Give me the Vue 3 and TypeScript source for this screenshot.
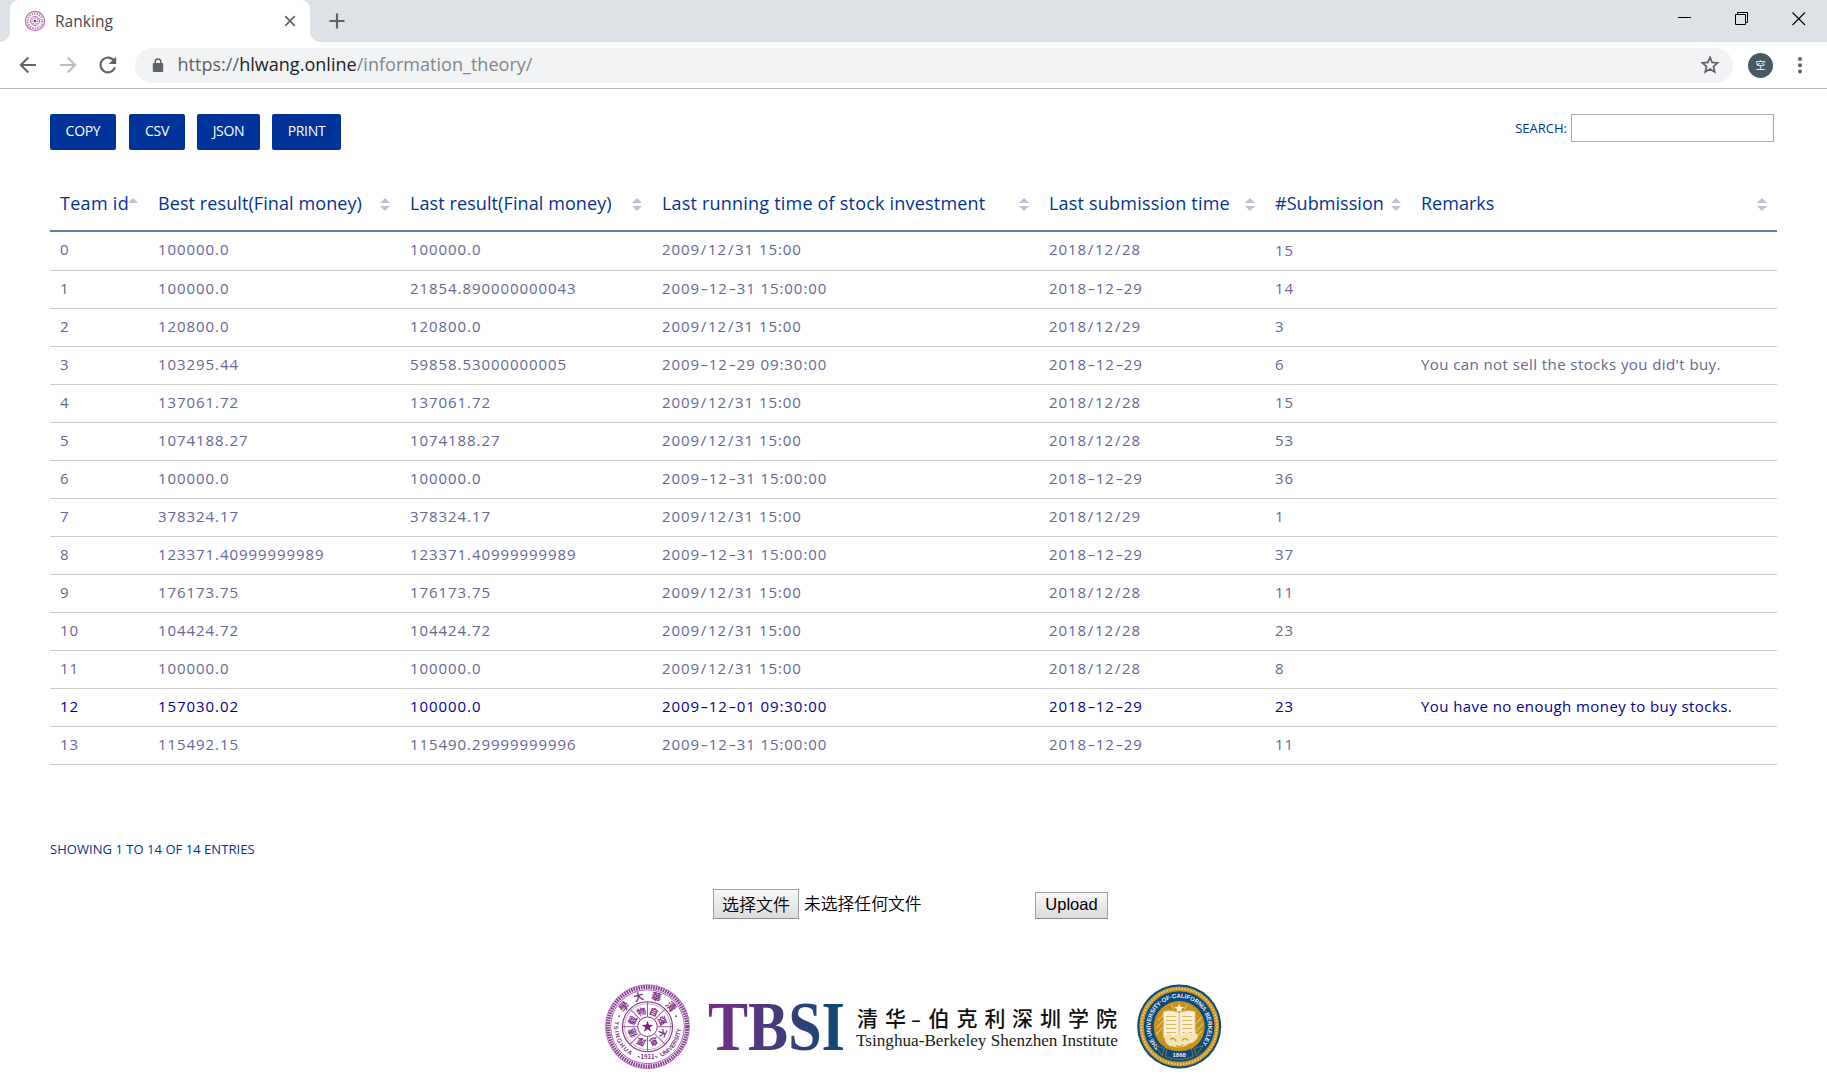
<script setup lang="ts">
interface Column { label: string; width: number; sorted?: boolean }
type Row = [string, string, string, string, string, string, string]

const columns: Column[] = [
  { label: 'Team id', width: 98, sorted: true },
  { label: 'Best result(Final money)', width: 252 },
  { label: 'Last result(Final money)', width: 252 },
  { label: 'Last running time of stock investment', width: 387 },
  { label: 'Last submission time', width: 226 },
  { label: '#Submission', width: 146 },
  { label: 'Remarks', width: 366 },
]

const rows: Row[] = [
  ['0', '100000.0', '100000.0', '2009/12/31 15:00', '2018/12/28', '15', ''],
  ['1', '100000.0', '21854.890000000043', '2009-12-31 15:00:00', '2018-12-29', '14', ''],
  ['2', '120800.0', '120800.0', '2009/12/31 15:00', '2018/12/29', '3', ''],
  ['3', '103295.44', '59858.53000000005', '2009-12-29 09:30:00', '2018-12-29', '6', "You can not sell the stocks you did't buy."],
  ['4', '137061.72', '137061.72', '2009/12/31 15:00', '2018/12/28', '15', ''],
  ['5', '1074188.27', '1074188.27', '2009/12/31 15:00', '2018/12/28', '53', ''],
  ['6', '100000.0', '100000.0', '2009-12-31 15:00:00', '2018-12-29', '36', ''],
  ['7', '378324.17', '378324.17', '2009/12/31 15:00', '2018/12/29', '1', ''],
  ['8', '123371.40999999989', '123371.40999999989', '2009-12-31 15:00:00', '2018-12-29', '37', ''],
  ['9', '176173.75', '176173.75', '2009/12/31 15:00', '2018/12/28', '11', ''],
  ['10', '104424.72', '104424.72', '2009/12/31 15:00', '2018/12/28', '23', ''],
  ['11', '100000.0', '100000.0', '2009/12/31 15:00', '2018/12/28', '8', ''],
  ['12', '157030.02', '100000.0', '2009-12-01 09:30:00', '2018-12-29', '23', 'You have no enough money to buy stocks.'],
  ['13', '115492.15', '115490.29999999996', '2009-12-31 15:00:00', '2018-12-29', '11', ''],
]
const hovered = 12

const parts = (text: string): string[] => text.split(/([-/])/)
const exportButtons = [
  { label: 'COPY', width: 66, gap: 13 },
  { label: 'CSV', width: 56, gap: 12 },
  { label: 'JSON', width: 63, gap: 12 },
  { label: 'PRINT', width: 69, gap: 0 },
]
const sectors = [0, 45, 90, 135, 180, 225, 270, 315]
const motto = [...'自强不息厚德载物']
</script>

<template>
  <div class="window">
    <div class="tabstrip">
      <div class="tab">
        <svg class="favicon" width="22" height="22" viewBox="0 0 22 22">
          <g fill="none" stroke="#b877b4">
            <circle cx="11" cy="11" r="9.6" stroke-width="1.2" />
            <circle cx="11" cy="11" r="7.4" stroke-width="2" stroke-dasharray="1.4 1.2" />
            <circle cx="11" cy="11" r="4.6" stroke-width="1" />
            <circle cx="11" cy="11" r="3" stroke-width="1.6" stroke-dasharray="1.1 .9" />
          </g>
          <circle cx="11" cy="11" r="1.3" fill="#7a2b80" />
        </svg>
        <span class="tab-title">Ranking</span>
        <svg class="tab-close" width="12" height="12" viewBox="0 0 12 12"><path d="M1.2 1.2l9.6 9.6M10.8 1.2l-9.6 9.6" stroke="#5f6368" stroke-width="1.7" /></svg>
      </div>
      <svg class="plus" width="16" height="16" viewBox="0 0 16 16"><path d="M8 .5v15M.5 8h15" stroke="#5f6368" stroke-width="2.2" /></svg>
      <div class="controls">
        <svg width="14" height="14" viewBox="0 0 14 14"><path d="M0 5.5h13" stroke="#000" /></svg>
        <svg width="14" height="14" viewBox="0 0 14 14"><path d="M.5 2.500h10v10h-10zM2.500 2.500v-2h10v10h-2" fill="none" stroke="#000" /></svg>
        <svg width="14" height="14" viewBox="0 0 14 14"><path d="M.5.5l12.500 12.500M13 .5L.5 13" stroke="#000" stroke-width="1.100" /></svg>
      </div>
    </div>

    <div class="toolbar">
      <svg class="nav" width="18" height="18" viewBox="0 0 18 18"><path d="M17 9H2.200M9.300 1.500L1.800 9l7.500 7.500" fill="none" stroke="#5f6368" stroke-width="2" /></svg>
      <svg class="nav" width="18" height="18" viewBox="0 0 18 18"><path d="M1 9h14.800M8.700 1.500L16.200 9l-7.500 7.500" fill="none" stroke="#bcbec1" stroke-width="2" /></svg>
      <svg class="nav reload" width="20" height="20" viewBox="0 0 20 20">
        <path d="M16.200 6A7.400 7.400 0 1 0 17 12.200" fill="none" stroke="#5f6368" stroke-width="2.100" />
        <path d="M18.200 1.500v7.600h-7.600z" fill="#5f6368" />
      </svg>
      <div class="omnibox">
        <svg class="lock" width="12" height="15" viewBox="0 0 12 15">
          <rect x=".8" y="5" width="10.400" height="9" rx="1.100" fill="#5f6368" />
          <path d="M3.200 5.500V3.700a2.800 2.800 0 0 1 5.600 0v1.800" fill="none" stroke="#5f6368" stroke-width="1.500" />
        </svg>
        <span class="url">https://<b>hlwang.online</b><i>/information_theory/</i></span>
        <svg class="star" width="20" height="20" viewBox="0 0 20 20"><path d="M10 2.400l2.150 5.050 5.450.5-4.150 3.600 1.250 5.350L10 14.050 5.300 16.900l1.250-5.350-4.150-3.600 5.450-.5z" fill="none" stroke="#5f6368" stroke-width="1.700" /></svg>
      </div>
      <div class="avatar">空</div>
      <svg class="dots" width="6" height="18" viewBox="0 0 6 18"><g fill="#5f6368"><circle cx="3" cy="3" r="2" /><circle cx="3" cy="9.200" r="2" /><circle cx="3" cy="15.400" r="2" /></g></svg>
    </div>

    <main class="page">
      <div class="actions">
        <button v-for="b in exportButtons" :key="b.label" class="export" :style="{ width: b.width + 'px', marginRight: b.gap + 'px' }">{{ b.label }}</button>
        <label class="search"><span>SEARCH:</span><input type="text" /></label>
      </div>

      <table class="ranking">
        <colgroup><col v-for="c in columns" :key="c.label" :style="{ width: c.width + 'px' }" /></colgroup>
        <thead>
          <tr>
            <th v-for="(c, i) in columns" :key="c.label">
              <div class="head">
                <span :class="'h' + i">{{ c.label }}</span>
                <svg class="sort" width="10" height="14" viewBox="0 0 10 14">
                  <path d="M0 5l5-5 5 5z" fill="#c1c0da" />
                  <path v-if="!c.sorted" d="M0 8l5 5 5-5z" fill="#c1c0da" />
                </svg>
              </div>
            </th>
          </tr>
        </thead>
        <tbody>
          <tr v-for="(row, r) in rows" :key="row[0]" :class="{ hovered: r === hovered }">
            <td v-for="(cell, c) in row" :key="c" :class="'c' + c">
              <template v-for="(p, k) in parts(cell)" :key="k"><span v-if="p === '-'" class="dash">-</span><span v-else-if="p === '/'" class="slash">/</span><template v-else>{{ p }}</template></template>
            </td>
          </tr>
        </tbody>
      </table>

      <div class="info">SHOWING 1 TO 14 OF 14 ENTRIES</div>

      <div class="upload">
        <button class="native pick">选择文件</button>
        <span class="status">未选择任何文件</span>
        <button class="native send">Upload</button>
      </div>

      <svg class="brand" width="624" height="90" viewBox="602 982 624 90">
        <defs>
          <linearGradient id="tbsi" gradientUnits="userSpaceOnUse" x1="708" y1="0" x2="844" y2="0">
            <stop offset="0" stop-color="#7b2d87" />
            <stop offset=".45" stop-color="#4a3a7b" />
            <stop offset="1" stop-color="#0b4a72" />
          </linearGradient>
          <path id="thu-left" d="M-32.600 -7A33.300 33.300 0 0 0 -13 30.700" />
          <path id="thu-right" d="M14 30.300A33.300 33.300 0 0 0 32.900 -5" />
          <path id="thu-top" d="M-25.500 -10A27.400 27.400 0 0 1 25.500 -10" />
          <path id="cal-ring" d="M-19.600 21A28.700 28.700 0 1 1 19.600 21" />
        </defs>

        <g transform="translate(647.500 1026.700)">
          <circle r="39.700" fill="none" stroke="#8b3f94" stroke-width="4" stroke-dasharray="1.700 .8" />
          <circle r="42" fill="none" stroke="#9a5aa3" stroke-width=".7" />
          <circle r="36.900" fill="none" stroke="#8b3f94" stroke-width=".8" />
          <circle r="25" fill="none" stroke="#7f2f88" stroke-width="1.100" />
          <circle r="23" fill="none" stroke="#a468ab" stroke-width=".6" />
          <circle r="9.800" fill="none" stroke="#7f2f88" stroke-width="1" />
          <g v-for="(a, i) in sectors" :key="a" :transform="`rotate(${a})`">
            <path d="M0 -10V-24.500" stroke="#9a5aa3" stroke-width="1" />
            <g transform="rotate(22.500)"><text class="seal-cn" y="-12.800" font-size="9">{{ motto[i] }}</text></g>
          </g>
          <path d="M0 -6l1.450 4.100 4.350.1-3.450 2.650 1.250 4.150L0 2.500l-3.600 2.500 1.250-4.150L-5.800 -1.800l4.350-.1z" fill="#7b2483" />
          <text class="seal-cn" font-size="10"><textPath href="#thu-top" startOffset="50%" textLength="57">學大華清</textPath></text>
          <text class="seal-en"><textPath href="#thu-left" startOffset="3%" textLength="40">TSINGHUA</textPath></text>
          <text class="seal-en"><textPath href="#thu-right" textLength="36">UNIVERSITY</textPath></text>
          <text class="seal-cn" y="32.500" font-size="6">~1911~</text>
          <circle cx="-28.500" cy="-10.500" r=".9" fill="#7f2f88" /><circle cx="28.500" cy="-10.500" r=".9" fill="#7f2f88" />
        </g>

        <text class="tbsi" x="708" y="1050" textLength="137" lengthAdjust="spacingAndGlyphs">TBSI</text>
        <text class="inst-cn" x="857 885" y="1026">清华</text>
        <text class="inst-cn" x="911" y="1026" textLength="10" lengthAdjust="spacingAndGlyphs">-</text>
        <text class="inst-cn" x="928.500 956.500 984.500 1012 1040 1068 1096" y="1026">伯克利深圳学院</text>
        <text class="inst-en" x="856" y="1046" textLength="262" lengthAdjust="spacingAndGlyphs">Tsinghua-Berkeley Shenzhen Institute</text>

        <g transform="translate(1179.200 1026.500)">
          <circle r="42" fill="#0c4a7b" />
          <circle r="37.600" fill="none" stroke="#c8941f" stroke-width="4.600" />
          <circle r="37.800" fill="none" stroke="#ecd08a" stroke-width="1.800" stroke-dasharray="1.500 1.500" />
          <circle r="25.500" fill="#c8921a" />
          <text class="cal"><textPath href="#cal-ring" textLength="132" startOffset="0">THE·UNIVERSITY·OF·CALIFORNIA·BERKELEY</textPath></text>
          <path d="M-23 8l7-8M-23 2l7-8M-21-6l6-7M22-9l-6 7M24-3l-8 9M23 4l-8 9M-8-22l3 5M8-22l-3 5" stroke="#ecd08a" stroke-width="1" />
          <path d="M0-23l1.300 3.300 3.500.2-2.700 2.200.9 3.500-3-1.900-3 1.900.9-3.500-2.700-2.200 3.500-.2z" fill="#fff4d6" />
          <path d="M-16-15q8-2.500 16 1 8-3.500 16-1v26q-8-2-16 1-8-3-16-1z" fill="#fbf1d6" stroke="#dcae50" stroke-width=".8" />
          <path d="M0-14v26M-13-10h10M-13-6h10M-13-2h10M-13 2h10M-13 6h10M3-10h10M3-6h10M3-2h10M3 2h10M3 6h10" stroke="#dfb45a" stroke-width="1" />
          <path d="M-15 10q5-6 9 0 5-5 9-1 4-8 8-2 6-2 8 2-2 7-9 8-8 6-16 3-8 0-9-10z" fill="#f4e3b4" />
          <path d="M-9 13q4-3 6 2M3 14q3-4 6 0M-3 19q4 3 7-1" fill="none" stroke="#c8921a" stroke-width="1.200" />
          <path d="M-12 22q12 5 24 0l2 8q-14 6-28 0zM-24 19l9 3-2 7zM24 19l-9 3 2 7z" fill="#0c4a7b" stroke="#c8941f" stroke-width=".6" />
          <text class="cal" y="30.500" text-anchor="middle">1868</text>
        </g>
      </svg>
    </main>
  </div>
</template>

<style>
body { margin: 0; background: #fff; overflow: hidden; }
</style>

<style scoped>
.window { width: 1827px; height: 1080px; background: #fff; font-family: "Open Sans", "Noto Sans CJK SC", sans-serif; overflow: hidden; }
.tabstrip { height: 42px; display: flex; align-items: center; background: #dee1e6; box-sizing: border-box; padding-left: 10px; }
.tab { position: relative; width: 300px; height: 42px; box-sizing: border-box; background: #fff; border-radius: 9px 9px 0 0; display: flex; align-items: center; padding-left: 14px; }
.tab::before, .tab::after { content: ""; position: absolute; bottom: 0; width: 10px; height: 10px; }
.tab::before { left: -10px; background: radial-gradient(circle at 0 0, transparent 9.500px, #fff 10px); }
.tab::after { right: -10px; background: radial-gradient(circle at 100% 0, transparent 9.500px, #fff 10px); }
.tab-title { margin-left: 9px; font-size: 15.500px; color: #45494d; line-height: 20px; letter-spacing: .05px; }
.tab-close { margin-left: auto; margin-right: 14px; }
.plus { margin-left: 19px; }
.controls { margin-left: auto; margin-right: 21px; display: flex; gap: 43px; align-self: flex-start; padding-top: 12px; }
.toolbar { height: 47px; box-sizing: border-box; border-bottom: 1px solid #b5b5b6; display: flex; align-items: center; padding-left: 19px; }
.nav { margin-right: 22px; flex: none; }
.nav.reload { margin-left: -1px; margin-right: 17px; }
.omnibox { width: 1598px; height: 35px; border-radius: 18px; background: #f1f3f4; display: flex; align-items: center; }
.lock { margin-left: 17px; }
.url { margin-left: 13.500px; margin-top: -2px; font-size: 18px; line-height: 24px; color: #5f6368; letter-spacing: .03px; }
.url b { font-weight: 400; color: #202124; }
.url i { font-style: normal; color: #80868b; }
.star { margin-left: auto; margin-right: 13px; }
.avatar { width: 25px; height: 25px; margin-left: 15px; border-radius: 50%; background: #455a64; color: #fff; font-size: 10px; line-height: 25px; text-align: center; }
.dots { margin-left: 24px; }
.page { padding: 25px 50px 0; }
.actions { display: flex; align-items: flex-start; height: 36px; }
.export { height: 36px; padding: 0 0 3px; border: 0; border-radius: 2px; background: #039; color: #fff; font: 500 14px "Open Sans", sans-serif; letter-spacing: -.3px; }
.search { margin-left: auto; margin-right: 3px; display: flex; align-items: center; font-size: 13px; color: #039; }
.search span { margin-right: 4px; margin-top: -1px; letter-spacing: 0; }
.search input { width: 203px; height: 28px; box-sizing: border-box; border: 1px solid #a9a9a9; padding: 0; }
.ranking { width: 1727px; margin-top: 29px; table-layout: fixed; border-collapse: separate; border-spacing: 0; }
.ranking th { height: 51px; padding: 0 10px; border-bottom: 2px solid #6678b1; font-weight: 400; text-align: left; color: #039; }
.head { display: flex; align-items: center; justify-content: space-between; height: 51px; margin-top: -2px; white-space: nowrap; font-size: 18px; }
.head span { margin-top: -2px; }
.sort { flex: none; margin-top: 2px; }
.h0 { width: 68px; letter-spacing: .3px; }
.h1, .h2 { letter-spacing: .09px; }
.h3, .h4 { letter-spacing: .2px; }
.h5 { letter-spacing: .05px; }
.h6 { letter-spacing: 0; }
.ranking td { height: 33px; padding: 0 10px 4px; border-bottom: 1px solid #ccc; color: #669; font-size: 15px; line-height: 20px; letter-spacing: .93px; white-space: nowrap; }
.ranking tbody tr:first-child td { height: 34px; }
.ranking tbody tr:first-child .c5 { padding: 1px 10px 3px; }
.ranking td.c6 { letter-spacing: .42px; }
.ranking .hovered td { color: #009; }
.dash { display: inline-block; width: 8.800px; letter-spacing: 0; text-align: center; transform: scaleX(1.600); }
.slash { margin: 0 .8px; }
.info { margin-top: 75px; font-size: 13px; line-height: 18px; color: #039; letter-spacing: .04px; }
.upload { display: flex; align-items: flex-start; margin: 31px 0 0 663px; height: 30px; font-size: 17px; color: #000; }
.native { box-sizing: border-box; padding: 0; border: 1px solid #a0a0a0; border-bottom-color: #8c8c8c; background: linear-gradient(#f7f7f7, #dcdcdc); color: #000; }
.pick { width: 86px; height: 30px; font: 17px "Noto Sans CJK SC", sans-serif; font-weight: 350; line-height: 26px; }
.status { width: 231px; margin-left: 5px; font-family: "Noto Sans CJK SC", sans-serif; font-size: 16.800px; font-weight: 350; line-height: 28px; white-space: nowrap; }
.send { width: 73px; height: 27px; margin-top: 3px; padding-bottom: 3px; font: 16.500px "Liberation Sans", Arial, sans-serif; line-height: 22px; }
.brand { display: block; margin: 63px 0 0 552px; }
.seal-cn { fill: #7f2f88; font-family: "Noto Sans CJK TC", sans-serif; font-weight: 700; text-anchor: middle; }
.seal-en { fill: #7f2f88; font: 700 6px "Liberation Sans", sans-serif; }
.tbsi { fill: url(#tbsi); font: 700 69px "Liberation Serif", serif; }
.inst-cn { fill: #111; font: 500 21px "Liberation Serif", "Noto Sans CJK SC", serif; }
.inst-en { fill: #1a1a1a; font: 17.500px "Liberation Serif", serif; }
.cal { fill: #e8edf2; font: 700 6px "Liberation Sans", sans-serif; }
</style>
